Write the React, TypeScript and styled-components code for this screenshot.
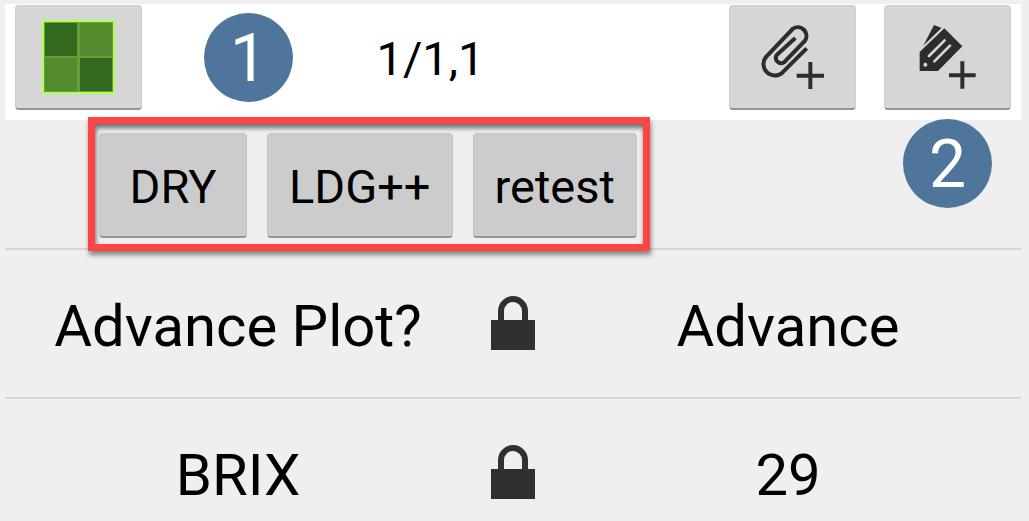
import React from "react";
import styled, { createGlobalStyle } from "styled-components";

const GlobalStyle = createGlobalStyle`
  * { box-sizing: border-box; }
  body {
    margin: 0;
    background: #efefef;
    color: #000;
    font-family: Roboto, "Liberation Sans", sans-serif;
  }
`;

const Screen = styled.main`
  height: 100vh;
  overflow: hidden;
  padding: 4px 8px 0 5px;
`;

const Header = styled.header`
  display: flex;
  align-items: flex-start;
  height: 116px;
  padding: 1px 10px 0;
  background: #fff;
`;

const Button = styled.button`
  display: flex;
  align-items: center;
  justify-content: center;
  height: 105px;
  padding: 0;
  border: 1px solid rgba(0, 0, 0, 0.04);
  border-bottom: 2px solid #949494;
  border-radius: 4px;
  background: #d6d6d6;
  color: #000;
  font: 400 47px/56px Roboto, "Liberation Sans", sans-serif;
  white-space: nowrap;
  cursor: pointer;
`;

const IconButton = styled(Button)`
  flex: none;
  width: 127px;
`;

const TagButton = styled(Button)`
  min-width: 148px;
  padding: 4px 21px 0;
  background: #cccccc;
`;

const Title = styled.h1`
  flex: 1;
  margin: 0;
  padding-right: 10px;
  font-size: 47px;
  font-weight: 400;
  line-height: 108px;
  text-align: center;
`;

const Actions = styled.div`
  display: flex;
  gap: 28px;
`;

const Anchor = styled.div`
  position: relative;
`;

const Badge = styled.span<{ $left: number; $top: number }>`
  position: absolute;
  z-index: 2;
  left: ${(p) => p.$left}px;
  top: ${(p) => p.$top}px;
  width: 89px;
  height: 89px;
  border-radius: 50%;
  background: #4e759c;
  color: #fff;
  font: 400 66px/92px Roboto, "Liberation Sans", sans-serif;
  text-align: center;
`;

const TagBar = styled.section`
  display: flex;
  padding-left: 83px;
  border-bottom: 2px solid #d6d6d6;
`;

const Highlight = styled.div`
  position: relative;
  display: flex;
  gap: 20px;
  margin: -3px 0;
  padding: 9px 6px 6px 4px;
  border: 7px solid #ff4444;
  box-shadow: 1px 4px 5px rgba(0, 0, 0, 0.45), inset 1px 4px 5px rgba(0, 0, 0, 0.55);
`;

const TraitList = styled.dl`
  margin: 0;
`;

const TraitRow = styled.div`
  display: grid;
  grid-template-columns: 1fr 84px 1fr;
  align-items: center;
  justify-items: center;
  height: 149px;
  padding-bottom: 1px;
  border-bottom: 2px solid #d6d6d6;
`;

const TraitName = styled.dt`
  padding-top: 6px;
  font-size: 58px;
  line-height: 68px;
`;

const TraitValue = styled.dd`
  margin: 0;
  padding-top: 6px;
  font-size: 58px;
  line-height: 68px;
`;

const PlotIcon = () => (
  <svg width="73" height="74" viewBox="0 0 73 74" aria-hidden="true">
    <rect width="73" height="74" fill="#b2ff59" />
    <rect x="2" y="2" width="69" height="70" fill="#689f38" />
    <rect x="3" y="3" width="32" height="33" fill="#33691e" />
    <rect x="38" y="3" width="32" height="33" fill="#558b2f" />
    <rect x="3" y="38" width="32" height="33" fill="#558b2f" />
    <rect x="38" y="38" width="32" height="33" fill="#33691e" />
  </svg>
);

const AttachIcon = () => (
  <svg width="66" height="70" viewBox="32 21 198 210" aria-hidden="true">
    <path
      d="M172 100 L99 173 A34 34 0 0 1 51 125 L131 41 A26 26 0 0 1 167 77 L104 142 A16 16 0 0 1 82 120 L138 69"
      fill="none"
      stroke="#2d2d2d"
      strokeWidth="12"
    />
    <path d="M142 182H224M183 141V222" stroke="#2d2d2d" strokeWidth="12" />
  </svg>
);

const TagIcon = () => (
  <svg width="66" height="70" viewBox="46 21 198 210" aria-hidden="true">
    <path d="M60 111 L134 40 L188 94 L115 168 H60Z M103 30 L126 39 L70 94Z" fill="#2d2d2d" />
    <path d="M70 96 L130 38" stroke="#d6d6d6" strokeWidth="4" />
    <path d="M88 123 L135 76 M104 139 L151 92" stroke="#d6d6d6" strokeWidth="8" strokeLinecap="round" />
    <circle cx="77" cy="149" r="6" fill="#d6d6d6" />
    <path d="M148 181H228M188 139V221" stroke="#2d2d2d" strokeWidth="12" />
  </svg>
);

const LockIcon = () => (
  <svg width="44" height="54" viewBox="0 0 44 54" role="img" aria-label="Locked">
    <rect y="24" width="44" height="30" fill="#303030" />
    <path d="M10 26V15A12 12 0 0 1 34 15V26" fill="none" stroke="#303030" strokeWidth="6" />
  </svg>
);

const tags = ["DRY", "LDG++", "retest"];
const traits = [
  { name: "Advance Plot?", value: "Advance" },
  { name: "BRIX", value: "29" },
];

export default function App() {
  return (
    <Screen>
      <GlobalStyle />
      <Header>
        <Anchor>
          <IconButton aria-label="Plot">
            <PlotIcon />
          </IconButton>
          <Badge $left={189} $top={8}>1</Badge>
        </Anchor>
        <Title>1/1,1</Title>
        <Actions>
          <IconButton aria-label="Add attachment">
            <AttachIcon />
          </IconButton>
          <Anchor>
            <IconButton aria-label="Add tag">
              <TagIcon />
            </IconButton>
            <Badge $left={19} $top={114}>2</Badge>
          </Anchor>
        </Actions>
      </Header>
      <TagBar>
        <Highlight>
          {tags.map((tag) => (
            <TagButton key={tag}>{tag}</TagButton>
          ))}
        </Highlight>
      </TagBar>
      <TraitList>
        {traits.map((t) => (
          <TraitRow key={t.name}>
            <TraitName>{t.name}</TraitName>
            <LockIcon />
            <TraitValue>{t.value}</TraitValue>
          </TraitRow>
        ))}
      </TraitList>
    </Screen>
  );
}
